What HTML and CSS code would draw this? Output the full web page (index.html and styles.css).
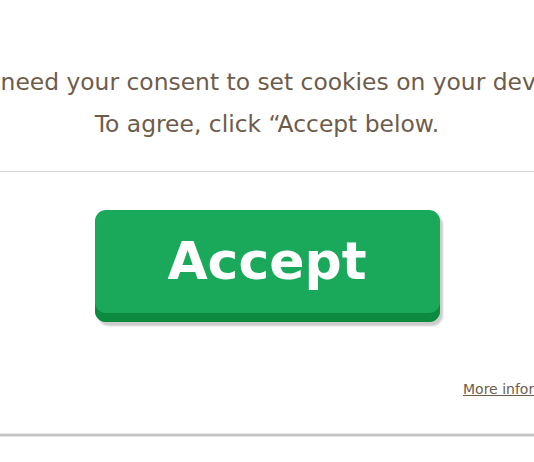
FILE: index.html
```html
<!DOCTYPE html>
<html lang="en">
<head>
    <meta charset="UTF-8">
    <title>Cookie consent</title>
    <link rel="stylesheet" href="styles.css">
</head>
<body>
    <section class="consent">
        <div class="consent-text">
            <p>We need your consent to set cookies on your device.</p>
            <p>To agree, click “Accept below.</p>
        </div>
        <div class="consent-actions">
            <button type="button" class="accept-btn">Accept</button>
            <a href="#" class="more-link">More information</a>
        </div>
    </section>
</body>
</html>
```

FILE: styles.css
```css
* {
    margin: 0;
    padding: 0;
    box-sizing: border-box;
}

html, body {
    overflow: hidden;
}

body {
    font-family: 'DejaVu Sans', Verdana, sans-serif;
    background: #fff;
    color: #6e5c4b;
    width: 534px;
    height: 462px;
}

.consent {
    width: 800px;
    margin-left: -133px;
    background: #fff;
    border-bottom: 2px solid #c4c4c4;
    box-shadow: 0 1px 0 #e2e2e2, 0 -1px 0 #e6e6e6 inset;
}

.consent-text {
    text-align: center;
    font-size: 23.4px;
    line-height: 42px;
    padding: 61px 0 26px;
    border-bottom: 1px solid #d9d5d0;
    white-space: nowrap;
}

.consent-actions {
    position: relative;
    height: 262px;
    padding-top: 38px;
    display: flex;
    justify-content: center;
    align-items: flex-start;
}

.accept-btn {
    width: 345px;
    height: 112px;
    border: none;
    border-radius: 11px;
    background: #1aa85a;
    box-shadow: inset 0 -9px 0 #0c8b40, 3px 4px 2px rgba(0,0,0,0.2);
    color: #fff;
    font-family: 'DejaVu Sans', Verdana, sans-serif;
    font-weight: bold;
    font-size: 52px;
    padding-bottom: 10px;
    cursor: pointer;
}

.more-link {
    position: absolute;
    left: 596px;
    top: 209px;
    color: #6e5c4b;
    font-size: 14px;
    text-decoration: underline;
    white-space: nowrap;
}
```
